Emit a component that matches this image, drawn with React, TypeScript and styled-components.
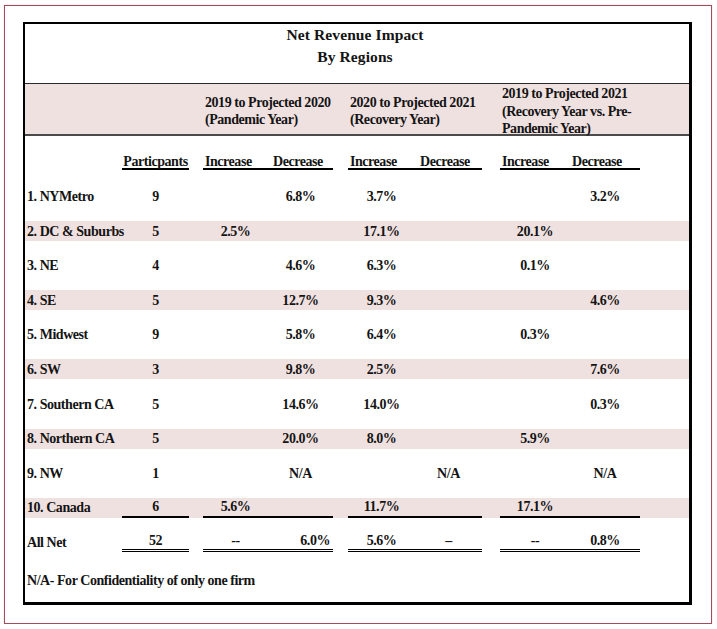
import React from "react";
import styled, { createGlobalStyle, css } from "styled-components";

const Global = createGlobalStyle`
  html, body { margin: 0; padding: 0; background: #ffffff; }
  body {
    font-family: "Liberation Serif", "Times New Roman", serif;
    color: #141414;
  }
`;

const COLS = "97px 67px 14px 130px 15px 134px 18px 140px 1fr";
const PINK = "#f0e1e1";

const Frame = styled.div`
  box-sizing: border-box;
  margin: 5px 0 0 4px;
  width: 708px;
  height: 619px;
  border: 1px solid #a24c5c;
  box-shadow: 0 0 1px rgba(162, 76, 92, 0.45);
  padding: 16px 0 0 18px;
`;

const Sheet = styled.div`
  box-sizing: border-box;
  width: 669px;
  height: 583px;
  border-style: solid;
  border-color: #000;
  border-width: 2px 3px 3px 2px;
  display: flex;
  flex-direction: column;
  font-weight: 700;
  font-size: 14px;
  letter-spacing: -0.45px;
`;

const Title = styled.div`
  box-sizing: border-box;
  height: 60px;
  border-bottom: 1px solid #2a2a2a;
  text-align: center;
  font-size: 15.5px;
  letter-spacing: 0.1px;
  line-height: 22px;
  padding-right: 4px;
`;

const GroupBand = styled.div`
  display: grid;
  grid-template-columns: ${COLS};
  height: 50px;
  background: ${PINK};
  border-bottom: 2px solid #4a4a4a;
  align-items: center;
`;

const GroupTitle = styled.div<{ $col: number }>`
  grid-column: ${(p) => p.$col};
  padding-left: 2px;
  padding-top: 1px;
  line-height: 17.5px;
  white-space: nowrap;
`;

const HeadRow = styled.div`
  display: grid;
  grid-template-columns: ${COLS};
  height: 34px;
  align-items: end;
`;

const ruleCss = (rule?: "single" | "double") =>
  rule === "single"
    ? css`border-bottom: 2px solid #000;`
    : rule === "double"
    ? css`border-bottom: 3px double #000;`
    : css``;

const HeadCell = styled.div<{ $col: number }>`
  grid-column: ${(p) => p.$col};
  border-bottom: 2px solid #000;
  line-height: 13px;
  white-space: nowrap;
  text-align: center;
`;

const HeadGroup = styled.div<{ $col: number }>`
  grid-column: ${(p) => p.$col};
  display: grid;
  grid-template-columns: 1fr 1fr;
  border-bottom: 2px solid #000;
  line-height: 13px;
  white-space: nowrap;
`;

const HeadLabel = styled.span<{ $pad: number }>`
  padding-left: ${(p) => p.$pad}px;
`;

const Body = styled.div`
  display: flex;
  flex-direction: column;
  gap: 14.6px;
  padding-top: 16.5px;
`;

const Row = styled.div<{ $shade?: boolean }>`
  display: grid;
  grid-template-columns: ${COLS};
  height: 20px;
  background: ${(p) => (p.$shade ? PINK : "transparent")};
`;

const Label = styled.div`
  grid-column: 1;
  display: flex;
  align-items: center;
  padding-left: 2px;
  padding-top: 1px;
  white-space: nowrap;
`;

const Count = styled.div<{ $rule?: "single" | "double" }>`
  grid-column: 2;
  box-sizing: border-box;
  display: flex;
  align-items: center;
  justify-content: center;
  padding-top: 1px;
  ${(p) => ruleCss(p.$rule)}
`;

const Group = styled.div<{ $col: number; $rule?: "single" | "double" }>`
  grid-column: ${(p) => p.$col};
  box-sizing: border-box;
  display: grid;
  grid-template-columns: 1fr 1fr;
  padding-top: 1px;
  ${(p) => ruleCss(p.$rule)}
`;

const Value = styled.div<{ $right?: boolean }>`
  display: flex;
  align-items: center;
  justify-content: ${(p) => (p.$right ? "flex-end" : "center")};
  padding-right: ${(p) => (p.$right ? "3px" : "0")};
  white-space: nowrap;
`;

const Note = styled.div`
  margin-top: 4px;
  height: 20px;
  display: flex;
  align-items: center;
  padding-left: 2px;
`;

type Rule = "single" | "double";
type RowData = {
  label: string;
  p: string;
  v: string[];
  shade?: boolean;
  rule?: Rule;
  right?: number[];
};

const rows: RowData[] = [
  { label: "1. NYMetro", p: "9", v: ["", "6.8%", "3.7%", "", "", "3.2%"] },
  { label: "2. DC & Suburbs", p: "5", v: ["2.5%", "", "17.1%", "", "20.1%", ""], shade: true },
  { label: "3. NE", p: "4", v: ["", "4.6%", "6.3%", "", "0.1%", ""] },
  { label: "4. SE", p: "5", v: ["", "12.7%", "9.3%", "", "", "4.6%"], shade: true },
  { label: "5. Midwest", p: "9", v: ["", "5.8%", "6.4%", "", "0.3%", ""] },
  { label: "6. SW", p: "3", v: ["", "9.8%", "2.5%", "", "", "7.6%"], shade: true },
  { label: "7. Southern CA", p: "5", v: ["", "14.6%", "14.0%", "", "", "0.3%"] },
  { label: "8. Northern CA", p: "5", v: ["", "20.0%", "8.0%", "", "5.9%", ""], shade: true },
  { label: "9. NW", p: "1", v: ["", "N/A", "", "N/A", "", "N/A"] },
  { label: "10. Canada", p: "6", v: ["5.6%", "", "11.7%", "", "17.1%", ""], shade: true, rule: "single" },
  { label: "All Net", p: "52", v: ["--", "6.0%", "5.6%", "–", "--", "0.8%"], rule: "double", right: [1] },
];

const groupCols = [4, 6, 8];

export default function App() {
  return (
    <>
      <Global />
      <Frame>
        <Sheet>
          <Title>
            Net Revenue Impact
            <br />
            By Regions
          </Title>
          <GroupBand>
            <GroupTitle $col={4}>
              2019 to Projected 2020
              <br />
              (Pandemic Year)
            </GroupTitle>
            <GroupTitle $col={6}>
              2020 to Projected 2021
              <br />
              (Recovery Year)
            </GroupTitle>
            <GroupTitle $col={8}>
              2019 to Projected 2021
              <br />
              (Recovery Year vs. Pre-
              <br />
              Pandemic Year)
            </GroupTitle>
          </GroupBand>
          <HeadRow>
            <HeadCell $col={2}>Particpants</HeadCell>
            {groupCols.map((c) => (
              <HeadGroup key={c} $col={c}>
                <HeadLabel $pad={2}>Increase</HeadLabel>
                <HeadLabel $pad={c === 8 ? 2 : 5}>Decrease</HeadLabel>
              </HeadGroup>
            ))}
          </HeadRow>
          <Body>
            {rows.map((r) => (
              <Row key={r.label} $shade={r.shade}>
                <Label>{r.label}</Label>
                <Count $rule={r.rule}>{r.p}</Count>
                {groupCols.map((c, gi) => (
                  <Group key={c} $col={c} $rule={r.rule}>
                    <Value $right={r.right?.includes(gi * 2)}>{r.v[gi * 2]}</Value>
                    <Value $right={r.right?.includes(gi * 2 + 1)}>{r.v[gi * 2 + 1]}</Value>
                  </Group>
                ))}
              </Row>
            ))}
            <Note>N/A- For Confidentiality of only one firm</Note>
          </Body>
        </Sheet>
      </Frame>
    </>
  );
}
